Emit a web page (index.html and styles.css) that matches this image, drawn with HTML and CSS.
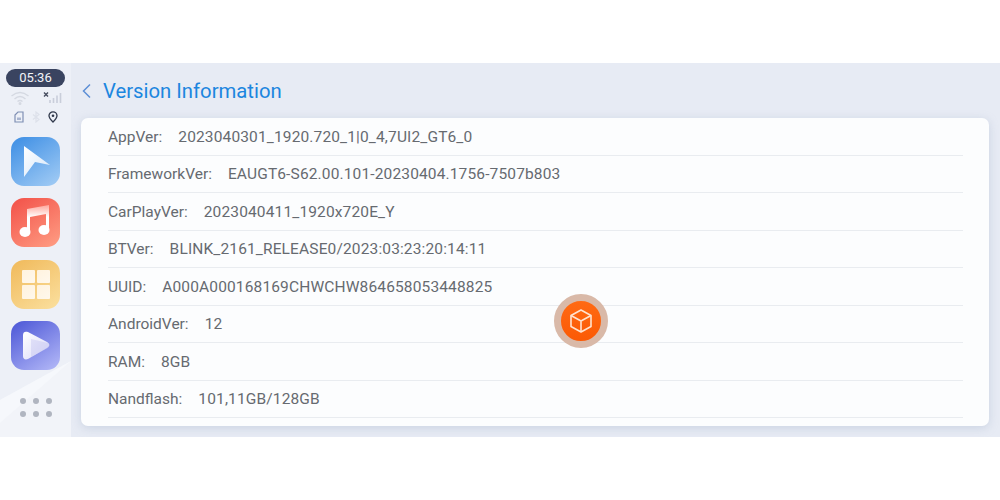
FILE: index.html
```html
<!DOCTYPE html>
<html lang="en">
<head>
<meta charset="utf-8">
<title>Version Information</title>
<link rel="stylesheet" href="styles.css">
</head>
<body>
<div class="screen">
  <aside class="sidebar">
    <svg class="sheen" viewBox="0 0 71 76" width="71" height="76"><polygon points="71,0 0,39 0,76 71,76" fill="#f2f4f9"/><polygon points="71,0 0,39 0,62" fill="#f6f8fc"/></svg>
    <div class="clock">05:36</div>
    <div class="status">
      <svg width="20" height="14" viewBox="0 0 20 14" fill="none" stroke="#d5d9e2" stroke-width="1.4"><path d="M1.5 5Q10-2 18.500 5M4.500 8Q10 3 15.500 8M7.500 10.500Q10 8.500 12.500 10.500"/><circle cx="10" cy="12.500" r=".8" fill="#d5d9e2"/></svg>
      <svg width="20" height="14" viewBox="0 0 20 14"><path d="M1 1.500l4 4M5 1.500l-4 4" stroke="#454c5e" stroke-width="1.400"/><path d="M7 12v-3M10.500 12V7M14 12V4.500M17.500 12V2" stroke="#c9ceda" stroke-width="1.600"/></svg>
    </div>
    <div class="status status-small">
      <svg width="10" height="12" viewBox="0 0 10 12" fill="none" stroke="#7f8fb4" stroke-width="1.200"><path d="M1 4l3-3h5v10H1z"/><path d="M3 6.500h4v2.500H3z" fill="#a9b5d0" stroke="none"/></svg>
      <svg width="8" height="12" viewBox="0 0 8 12" fill="none" stroke="#dde1ea" stroke-width="1.200"><path d="M1 3.500l6 5-3 2.500V1l3 2.500-6 5"/></svg>
      <svg width="10" height="12" viewBox="0 0 10 12" fill="none" stroke="#30384b" stroke-width="1.300"><path d="M5 11C2.500 8.500 1 6.800 1 4.800a4 4 0 0 1 8 0C9 6.800 7.500 8.500 5 11z"/><circle cx="5" cy="4.800" r="1.300" fill="#30384b" stroke="none"/></svg>
    </div>
    <div class="app app-nav">
      <svg width="49" height="49" viewBox="0 0 49 49"><defs><linearGradient id="navg" x1="0" y1="0" x2="1" y2="1"><stop offset="0" stop-color="#fff"/><stop offset="1" stop-color="#d5e6f9"/></linearGradient></defs><path d="M13 9L39 28 24 25 13 40z" fill="url(#navg)"/></svg>
    </div>
    <div class="app app-music">
      <svg width="49" height="49" viewBox="0 0 49 49"><defs><linearGradient id="musg" x1="0" y1="0" x2="0" y2="1"><stop offset="0" stop-color="#ffa79c"/><stop offset=".45" stop-color="#fff"/></linearGradient></defs><path d="M16 11L38 7V32h-3V16L19 19V34h-3z" fill="url(#musg)"/><ellipse cx="14" cy="34" rx="5.500" ry="5" fill="#fff"/><ellipse cx="33" cy="32" rx="5.500" ry="5" fill="#fff"/></svg>
    </div>
    <div class="app app-grid">
      <div class="pane"></div><div class="pane"></div><div class="pane"></div><div class="pane"></div>
    </div>
    <div class="app app-play">
      <svg width="49" height="49" viewBox="0 0 49 49"><defs><linearGradient id="plag" x1="0" y1="0" x2="1" y2="1"><stop offset="0" stop-color="#fff"/><stop offset="1" stop-color="#d8d8f8"/></linearGradient></defs><path d="M12 14c0-3 2-4 5-3l19 10c3 2 3 4 0 6L17 38c-3 1-5 0-5-3z" fill="url(#plag)"/><path d="M20 18l17 4c2 1 2 3 0 5L20 36z" fill="#b9b9ef" opacity=".35"/></svg>
    </div>
    <div class="dots"><i></i><i></i><i></i><i></i><i></i><i></i></div>
  </aside>
  <main class="main">
    <header class="head">
      <svg width="11" height="16" viewBox="0 0 11 16" fill="none" stroke="#5d8fd6" stroke-width="1.500"><path d="M9 1.500L2.500 8 9 14.500"/></svg>
      <h1 class="title">Version Information</h1>
    </header>
    <section class="card">
      <div class="row"><span>AppVer:</span><span class="value">2023040301_1920.720_1|0_4,7UI2_GT6_0</span></div>
      <div class="row"><span>FrameworkVer:</span><span class="value">EAUGT6-S62.00.101-20230404.1756-7507b803</span></div>
      <div class="row"><span>CarPlayVer:</span><span class="value">2023040411_1920x720E_Y</span></div>
      <div class="row"><span>BTVer:</span><span class="value">BLINK_2161_RELEASE0/2023:03:23:20:14:11</span></div>
      <div class="row"><span>UUID:</span><span class="value">A000A000168169CHWCHW864658053448825</span></div>
      <div class="row"><span>AndroidVer:</span><span class="value">12</span></div>
      <div class="row"><span>RAM:</span><span class="value">8GB</span></div>
      <div class="row"><span>Nandflash:</span><span class="value">101,11GB/128GB</span></div>
    </section>
  </main>
  <div class="fab">
    <svg width="26" height="26" viewBox="0 0 26 26" fill="none" stroke="#ffe3cf" stroke-width="1.600" stroke-linejoin="round"><path d="M13 2L23 7.500V18.500L13 24 3 18.500V7.500z"/><path d="M3 7.500L13 13 23 7.500M13 13V24"/></svg>
  </div>
</div>
</body>
</html>
```
FILE: styles.css
```css
* { box-sizing: border-box; }
html, body { margin: 0; padding: 0; background: #fff; }
body { padding-top: 63px; height: 500px; overflow: hidden; font-family: Roboto, "Liberation Sans", sans-serif; }
.screen { position: relative; display: flex; width: 1000px; height: 374px; background: #e7ebf4; overflow: hidden; }
.sidebar { position: relative; flex: 0 0 71px; display: flex; flex-direction: column; align-items: center; padding: 6px 0 0 0; background: #edf0f7; }
.sheen { position: absolute; left: 0; bottom: 0; }
.clock { position: relative; width: 59px; height: 18px; border-radius: 9px; background: #3a4460; color: #f2f4f8; font-size: 13px; line-height: 18px; text-align: center; }
.status { position: relative; display: flex; justify-content: space-between; width: 53px; margin-top: 4px; height: 14px; align-items: center; margin-left: 2px; }
.status-small { width: 44px; margin-top: 6px; height: 12px; margin-left: 0; }
.app { position: relative; flex: none; width: 49px; height: 49px; border-radius: 13px; margin-bottom: 12.330px; }
.status-small + .app { margin-top: 14px; }
.app-nav { background: linear-gradient(145deg, #3b8de4, #a4cdf5); }
.app-music { background: linear-gradient(145deg, #f25048, #ff9e84); }
.app-grid { display: grid; grid-template-columns: 13px 13px; grid-auto-rows: 13.500px; gap: 2px; align-content: center; justify-content: center; background: linear-gradient(145deg, #f0b95a, #fbe09f); }
.pane { background: linear-gradient(145deg, #fff3df, #fff8ec); border-radius: 1px; }
.app-play { background: linear-gradient(145deg, #4a55d6, #b5baf8); }
.dots { position: relative; display: grid; grid-template-columns: repeat(3, 6px); gap: 7px 7px; margin-top: 16px; }
.dots i { width: 6px; height: 6px; border-radius: 50%; background: #b0b5c0; }
.main { flex: 1; display: flex; flex-direction: column; min-width: 0; padding: 0 11px 11px 10px; }
.head { height: 55px; display: flex; align-items: center; gap: 11px; }
.title { margin: 0; color: #1c86df; font-size: 20.300px; font-weight: 400; }
.card { flex: 1; background: #fcfdfe; border-radius: 7px; padding: 0 26px 0 27px; box-shadow: 0 2px 10px rgba(150, 165, 195, .35); }
.row { height: 37.500px; display: flex; align-items: center; gap: 16px; padding-top: 1px; color: #666a70; font-size: 15.500px; border-bottom: 1px solid #e9ecf0; }
.value { letter-spacing: .14px; }
.fab { position: absolute; left: 554px; top: 231px; width: 54px; height: 54px; border-radius: 50%; border: 7px solid #d9b9a8; background: linear-gradient(#ff6a13, #fb5a05); display: flex; align-items: center; justify-content: center; }
```
